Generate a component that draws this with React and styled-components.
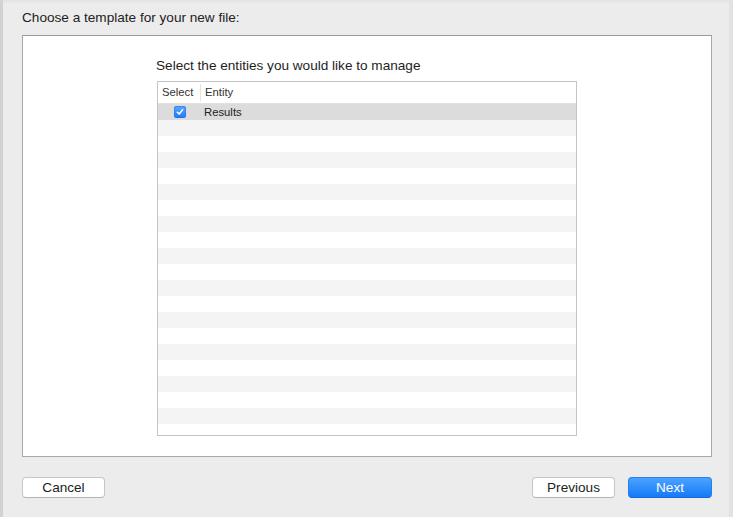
import React from "react";
import styled, { createGlobalStyle } from "styled-components";

const GlobalStyle = createGlobalStyle`
  html, body {
    margin: 0;
    padding: 0;
    background: #ececec;
  }
  body {
    font-family: "Liberation Sans", Arial, sans-serif;
    -webkit-font-smoothing: antialiased;
  }
`;

const rows = Array.from({ length: 21 }, (_, i) =>
  i === 0 ? { checked: true, name: "Results" } : null
);

export default function App() {
  return (
    <>
      <GlobalStyle />
      <Window>
        <Title>Choose a template for your new file:</Title>
        <Panel>
          <Heading>Select the entities you would like to manage</Heading>
          <Table>
            <HeaderRow>
              <HeaderCell $w={43}>Select</HeaderCell>
              <HeaderCell>Entity</HeaderCell>
            </HeaderRow>
            {rows.map((row, i) => (
              <Row key={i} $selected={i === 0} $striped={i % 2 === 1}>
                <CheckCell>
                  {row && (
                    <Checkbox>
                      <svg width="8" height="8" viewBox="0 0 8 8">
                        <path
                          d="M1.3 4.2 L3.2 6 L6.7 1.6"
                          fill="none"
                          stroke="#fff"
                          strokeWidth="1.5"
                          strokeLinecap="round"
                          strokeLinejoin="round"
                        />
                      </svg>
                    </Checkbox>
                  )}
                </CheckCell>
                <NameCell>{row ? row.name : ""}</NameCell>
              </Row>
            ))}
          </Table>
        </Panel>
        <Footer>
          <Button>Cancel</Button>
          <Spacer />
          <Button>Previous</Button>
          <Button $primary>Next</Button>
        </Footer>
      </Window>
    </>
  );
}

const Window = styled.div`
  width: 733px;
  height: 517px;
  box-sizing: border-box;
  padding: 10px 17px 0 19px;
  display: flex;
  flex-direction: column;
  background: #ececec;
  border-left: 3px solid #d2d2d2;
  border-right: 4px solid #e2e2e2;
  background-image: linear-gradient(#e2e2e2, #ececec 4px);
`;

const Title = styled.div`
  font-size: 13.6px;
  line-height: 16px;
  color: #222;
  margin-bottom: 9px;
`;

const Panel = styled.div`
  height: 422px;
  box-sizing: border-box;
  background: #fff;
  border: 1px solid #a8a8a8;
  border-top-color: #9a9a9a;
  display: flex;
  flex-direction: column;
  align-items: center;
  padding-top: 22px;
`;

const Heading = styled.div`
  width: 420px;
  font-size: 13.6px;
  line-height: 16px;
  color: #1e1e1e;
  margin-left: -2px;
  margin-bottom: 7px;
`;

const Table = styled.div`
  width: 420px;
  height: 355px;
  box-sizing: border-box;
  border: 1px solid #c4c4c4;
  overflow: hidden;
  background: #fff;
`;

const HeaderRow = styled.div`
  display: flex;
  height: 22px;
  box-sizing: border-box;
  border-bottom: 1px solid #e0e0e0;
  background: #fff;
`;

const HeaderCell = styled.div`
  ${({ $w }) => ($w ? `width: ${$w}px; border-right: 1px solid #e2e2e2;` : "flex: 1;")}
  box-sizing: border-box;
  font-size: 11.3px;
  color: #333;
  padding-left: 4px;
  margin: 2px 0;
  line-height: 17px;
`;

const Row = styled.div`
  display: flex;
  align-items: center;
  height: 16px;
  background: ${({ $selected, $striped }) =>
    $selected ? "#dcdcdc" : $striped ? "#f4f4f4" : "#fff"};
`;

const CheckCell = styled.div`
  width: 43px;
  display: flex;
  justify-content: center;
  align-items: center;
`;

const Checkbox = styled.span`
  width: 12px;
  height: 12px;
  border-radius: 3px;
  background: linear-gradient(#5aa7ff, #1d7bf4);
  box-shadow: inset 0 0 0 0.5px #1a6ad8;
  display: flex;
  align-items: center;
  justify-content: center;
`;

const NameCell = styled.div`
  flex: 1;
  font-size: 11.3px;
  line-height: 16px;
  color: #222;
  padding-left: 3px;
`;

const Footer = styled.div`
  display: flex;
  align-items: center;
  gap: 13px;
  padding-top: 20px;
`;

const Spacer = styled.div`
  flex: 1;
`;

const Button = styled.button`
  height: 21px;
  min-width: ${({ $primary }) => ($primary ? "84px" : "83px")};
  padding: 0 12px;
  box-sizing: border-box;
  border-radius: 4px;
  font-family: "Liberation Sans", Arial, sans-serif;
  font-size: 13.6px;
  line-height: 19px;
  cursor: pointer;
  color: ${({ $primary }) => ($primary ? "#fff" : "#222")};
  border: 1px solid ${({ $primary }) => ($primary ? "#2a7df0" : "#c6c6c6")};
  border-bottom-color: ${({ $primary }) => ($primary ? "#1465dc" : "#b4b4b4")};
  background: ${({ $primary }) =>
    $primary ? "linear-gradient(#4aa3ff, #167af6)" : "#fff"};
`;
